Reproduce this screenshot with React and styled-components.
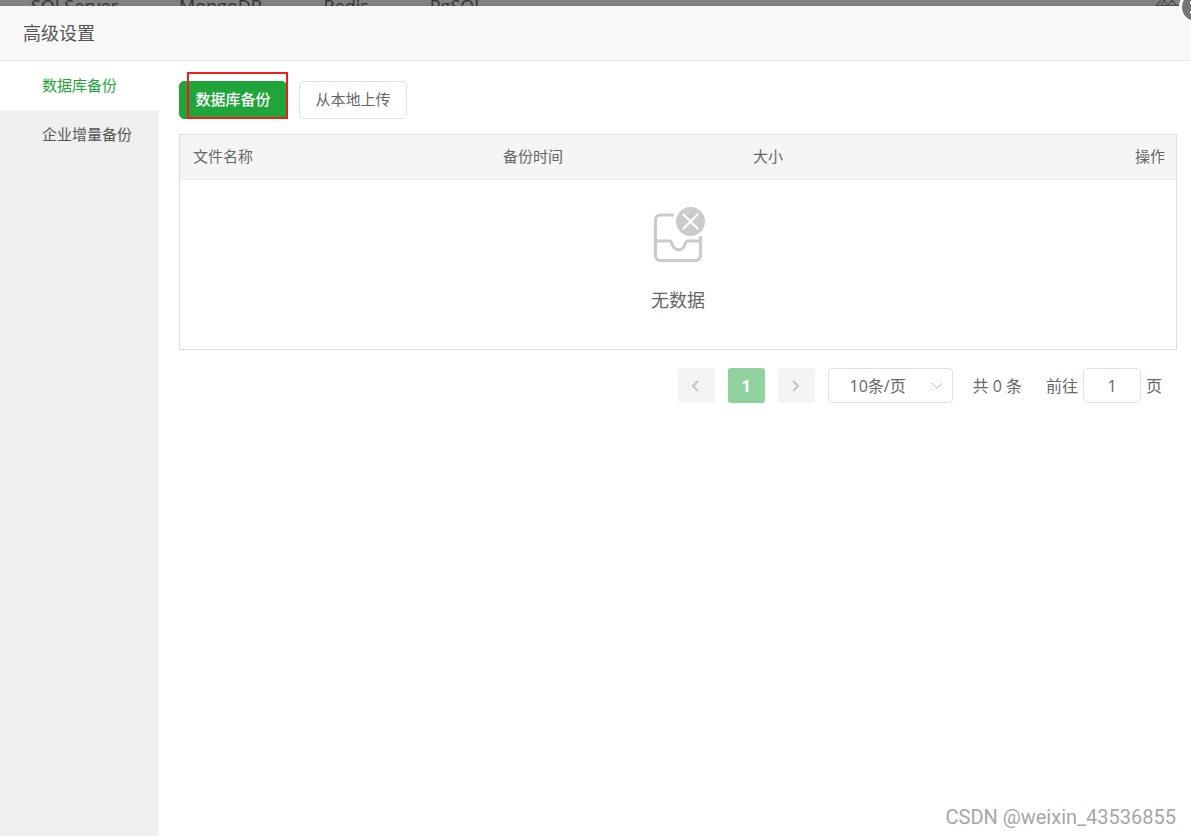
import React, { useState } from "react";
import styled, { createGlobalStyle } from "styled-components";

const App = () => {
    const [tab, setTab] = useState("db");
    const [size, setSize] = useState("10");
    const [page, setPage] = useState("1");

    return (
        <>
            <GlobalStyle />
            <Page>
                <Backdrop>
                    <a href="#sqlserver">SQLServer</a>
                    <a href="#mongodb">MongoDB</a>
                    <a href="#redis">Redis</a>
                    <a href="#pgsql">PgSQL</a>
                    <Corner width="24" height="6" viewBox="0 0 24 6">
                        <path d="M1 5.500H24M1 6 6 0M6 6 9 0M9 0 13 6M13 6 17 0M17 0 22 6" />
                    </Corner>
                </Backdrop>
                <Close type="button" aria-label="关闭">
                    <svg width="28" height="28" viewBox="0 0 28 28">
                        <path d="M8 9 20 20M20 9 8 20" />
                    </svg>
                </Close>
                <Header>
                    <h1>高级设置</h1>
                </Header>
                <Body>
                    <Sidebar>
                        <Tab type="button" $active={tab === "db"} onClick={() => setTab("db")}>数据库备份</Tab>
                        <Tab type="button" $active={tab === "inc"} onClick={() => setTab("inc")}>企业增量备份</Tab>
                    </Sidebar>
                    <Content>
                        <Toolbar>
                            <Marked>
                                <Button type="button" $primary>数据库备份</Button>
                            </Marked>
                            <Button type="button">从本地上传</Button>
                        </Toolbar>
                        <Table>
                            <thead>
                                <tr>
                                    <Th $width="310px">文件名称</Th>
                                    <Th $width="250px">备份时间</Th>
                                    <Th>大小</Th>
                                    <Th $align="right">操作</Th>
                                </tr>
                            </thead>
                            <tbody>
                                <tr>
                                    <Empty colSpan="4">
                                        <EmptyIcon />
                                        <p>无数据</p>
                                    </Empty>
                                </tr>
                            </tbody>
                        </Table>
                        <Pagination>
                            <Pager type="button" aria-label="上一页" disabled>
                                <Arrow d="M9 2 4 7 9 12" />
                            </Pager>
                            <Pager type="button" $current>1</Pager>
                            <Pager type="button" aria-label="下一页" disabled>
                                <Arrow d="M4 2 9 7 4 12" />
                            </Pager>
                            <SelectWrap>
                                <select aria-label="每页条数" value={size} onChange={(e) => setSize(e.target.value)}>
                                    <option value="10">10条/页</option>
                                    <option value="20">20条/页</option>
                                    <option value="50">50条/页</option>
                                </select>
                                <svg width="12" height="8" viewBox="0 0 12 8">
                                    <path d="M1 1 6 6 11 1" />
                                </svg>
                            </SelectWrap>
                            <Total>共 0 条</Total>
                            <Jump>
                                <span>前往</span>
                                <input value={page} onChange={(e) => setPage(e.target.value)} />
                                <span>页</span>
                            </Jump>
                        </Pagination>
                    </Content>
                </Body>
                <Watermark>CSDN @weixin_43536855</Watermark>
            </Page>
        </>
    );
};

const Arrow = ({ d }) => (
    <svg width="14" height="14" viewBox="0 0 14 14" fill="none" stroke="#c4c4c4" strokeWidth="2">
        <path d={d} />
    </svg>
);

const EmptyIcon = () => (
    <svg width="54" height="58" viewBox="0 0 54 58" fill="none" stroke="#cbcbcb" strokeWidth="3.2">
        <path d="M23 10H9.500a5 5 0 0 0-5 5v35.500a5 5 0 0 0 5 5h35a5 5 0 0 0 5-5V31" />
        <path d="M4.500 36H18.500c1.200 0 1.800.5 2.100 1.500 1.200 5 3.400 7.300 7 7.300s5.800-2.300 7-7.300c.3-1 .9-1.500 2.100-1.500h12.800" />
        <circle cx="39.500" cy="16.500" r="14.500" fill="#cbcbcb" stroke="none" />
        <path d="M32.500 9.500l14 14M46.500 9.500l-14 14" stroke="#fff" strokeWidth="2.200" strokeLinecap="round" />
    </svg>
);

const GlobalStyle = createGlobalStyle`
    * {
        box-sizing: border-box;
    }

    body {
        margin: 0;
        color: #666;
        font-family: "Open Sans", "Noto Sans CJK SC", sans-serif;
        font-size: 15px;
        background: #fff;
    }

    button, input, select {
        font: inherit;
        color: inherit;
        margin: 0;
    }
`;

const Page = styled.div`
    position: relative;
    display: flex;
    flex-direction: column;
    min-height: 100vh;
    overflow: hidden;
`;

const Backdrop = styled.nav`
    display: flex;
    gap: 61px;
    height: 6px;
    padding: 0 12px 0 31px;
    overflow: hidden;
    background: #808080;

    & a {
        margin-top: -6px;
        font-size: 18px;
        line-height: 24px;
        color: #333;
        text-decoration: none;
    }
`;

const Corner = styled.svg`
    margin-left: auto;
    fill: none;
    stroke: #4a4a4a;
    stroke-width: 1.2;
`;

const Close = styled.button`
    position: absolute;
    top: -10px;
    right: -22px;
    width: 34px;
    height: 34px;
    padding: 0;
    border: 3px solid #fff;
    border-radius: 50%;
    background: #757575;

    & svg {
        display: block;
        fill: none;
        stroke: #fff;
        stroke-width: 2;
    }
`;

const Header = styled.header`
    padding: 0 23px;
    background: #f8f8f8;
    border-bottom: 1px solid #ebebeb;

    & h1 {
        margin: 0;
        font-size: 18px;
        font-weight: 400;
        line-height: 54px;
        color: #555;
    }
`;

const Body = styled.div`
    display: flex;
    flex: 1;
`;

const Sidebar = styled.aside`
    flex: 0 0 159px;
    background: #efefef;
`;

const Tab = styled.button`
    display: block;
    width: 100%;
    height: 49px;
    padding: 0 0 2px 42px;
    border: 0;
    text-align: left;
    color: ${(props) => (props.$active ? "#20a53a" : "#555")};
    background: ${(props) => (props.$active ? "#fff" : "transparent")};
`;

const Content = styled.main`
    flex: 1;
    padding: 20px 14px 20px 20px;
`;

const Toolbar = styled.div`
    display: flex;
    gap: 12px;
    margin-bottom: 15px;
`;

const Button = styled.button`
    min-width: 108px;
    height: 38px;
    padding: 0 15px 3px;
    border: 1px solid ${(props) => (props.$primary ? "#20a53a" : "#dcdfe6")};
    border-radius: 5px;
    color: ${(props) => (props.$primary ? "#fff" : "#666")};
    font-weight: ${(props) => (props.$primary ? 500 : 400)};
    background: ${(props) => (props.$primary ? "#20a53a" : "#fff")};
`;

const Marked = styled.div`
    position: relative;
    display: flex;

    &::after {
        content: '';
        position: absolute;
        top: -9px;
        right: -1px;
        bottom: 0;
        left: 8px;
        border: 2px solid #ed1c24;
        pointer-events: none;
    }
`;

const Table = styled.table`
    width: 100%;
    border: 1px solid #ddd;
    border-bottom-color: #e0e0e2;
    border-spacing: 0;
    table-layout: fixed;
`;

const Th = styled.th`
    width: ${(props) => props.$width || "auto"};
    height: 45px;
    padding: 0 11px 4px 13px;
    border-bottom: 1px solid #ebeef5;
    font-weight: 400;
    text-align: ${(props) => props.$align || "left"};
    background: #f5f5f5;
`;

const Empty = styled.td`
    height: 169px;
    padding: 0;
    text-align: center;

    & svg {
        display: block;
        margin: 0 auto;
    }

    & p {
        margin: 21px 0 9px;
        font-size: 18px;
        line-height: 32px;
    }
`;

const Pagination = styled.div`
    display: flex;
    justify-content: flex-end;
    align-items: center;
    padding: 18px 15px 0 0;
    font-size: 16px;
`;

const Pager = styled.button`
    display: flex;
    align-items: center;
    justify-content: center;
    width: 37px;
    height: 35px;
    margin-right: 13px;
    padding: 0;
    border: 0;
    border-radius: 3px;
    font-weight: 700;
    color: #fff;
    background: ${(props) => (props.$current ? "#90d29d" : "#f4f4f4")};
`;

const SelectWrap = styled.div`
    position: relative;

    & select {
        display: block;
        width: 125px;
        height: 35px;
        padding: 0 30px 0 21px;
        border: 1px solid #dcdfe6;
        border-radius: 4px;
        appearance: none;
        background: #fff;
    }

    & svg {
        position: absolute;
        top: 14px;
        right: 10px;
        fill: none;
        stroke: #c0c4cc;
        pointer-events: none;
    }
`;

const Total = styled.span`
    margin: 0 24px 0 20px;
    padding-bottom: 2px;
`;

const Jump = styled.label`
    display: flex;
    align-items: center;
    gap: 5px;

    & span {
        padding-bottom: 2px;
    }

    & input {
        width: 58px;
        height: 35px;
        padding: 0;
        border: 1px solid #dcdfe6;
        border-radius: 5px;
        text-align: center;
        background: #fff;
    }
`;

const Watermark = styled.div`
    position: absolute;
    right: 15px;
    bottom: 7px;
    font-family: Roboto, sans-serif;
    font-size: 20px;
    font-weight: 400;
    line-height: 24px;
    color: #a6a6a6;
`;

export default App;
